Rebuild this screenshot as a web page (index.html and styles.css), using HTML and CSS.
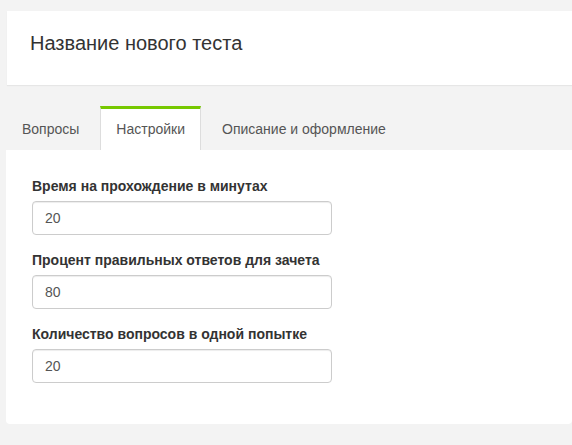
FILE: index.html
```html
<!DOCTYPE html>
<html lang="ru">
<head>
<meta charset="utf-8">
<title>Название нового теста</title>
<link rel="stylesheet" href="styles.css">
</head>
<body>
<div class="page">
  <div class="header">
    <h1 class="title">Название нового теста</h1>
  </div>
  <ul class="tabs">
    <li class="tab">Вопросы</li>
    <li class="tab active">Настройки</li>
    <li class="tab">Описание и оформление</li>
  </ul>
  <div class="panel">
    <div class="form-group">
      <label class="label">Время на прохождение в минутах</label>
      <input class="input" type="text" value="20">
    </div>
    <div class="form-group">
      <label class="label">Процент правильных ответов для зачета</label>
      <input class="input" type="text" value="80">
    </div>
    <div class="form-group">
      <label class="label">Количество вопросов в одной попытке</label>
      <input class="input" type="text" value="20">
    </div>
  </div>
</div>
</body>
</html>
```
FILE: styles.css
```css
html, body {
  margin: 0;
  padding: 0;
  background: #f3f3f3;
  overflow: hidden;
  font-family: "Liberation Sans", Arial, sans-serif;
  font-size: 14px;
  line-height: 20px;
  color: #333;
}
.page {
  padding-top: 11px;
}
.header {
  margin-left: 7px;
  height: 74px;
  box-sizing: border-box;
  background: #fff;
  padding: 22px 23px;
  box-shadow: 0 1px 1px rgba(0, 0, 0, 0.05);
}
.title {
  margin: 0;
  font-size: 20px;
  font-weight: normal;
  line-height: 20px;
  color: #333;
}
.tabs {
  list-style: none;
  margin: 21px 0 0 6px;
  padding: 0;
  display: flex;
}
.tab {
  margin-right: 5px;
  padding: 10px 15px 11px;
  border: 1px solid transparent;
  border-top: 3px solid transparent;
  border-bottom: 0;
  color: #555;
  white-space: nowrap;
}
.tab.active {
  background: #fff;
  border-color: #ddd;
  border-top-color: #76c800;
}
.panel {
  margin-left: 6px;
  background: #fff;
  border-radius: 0 0 4px 4px;
  padding: 26px 26px 26px;
}
.form-group {
  margin-bottom: 15px;
}
.label {
  display: block;
  font-weight: bold;
  margin-bottom: 5px;
  color: #333;
}
.input {
  display: block;
  box-sizing: border-box;
  width: 300px;
  height: 34px;
  padding: 6px 12px;
  margin: 0;
  border: 1px solid #ccc;
  border-radius: 4px;
  font-family: "Liberation Sans", Arial, sans-serif;
  font-size: 14px;
  color: #555;
  background: #fff;
  box-shadow: inset 0 1px 1px rgba(0, 0, 0, 0.075);
}
```
